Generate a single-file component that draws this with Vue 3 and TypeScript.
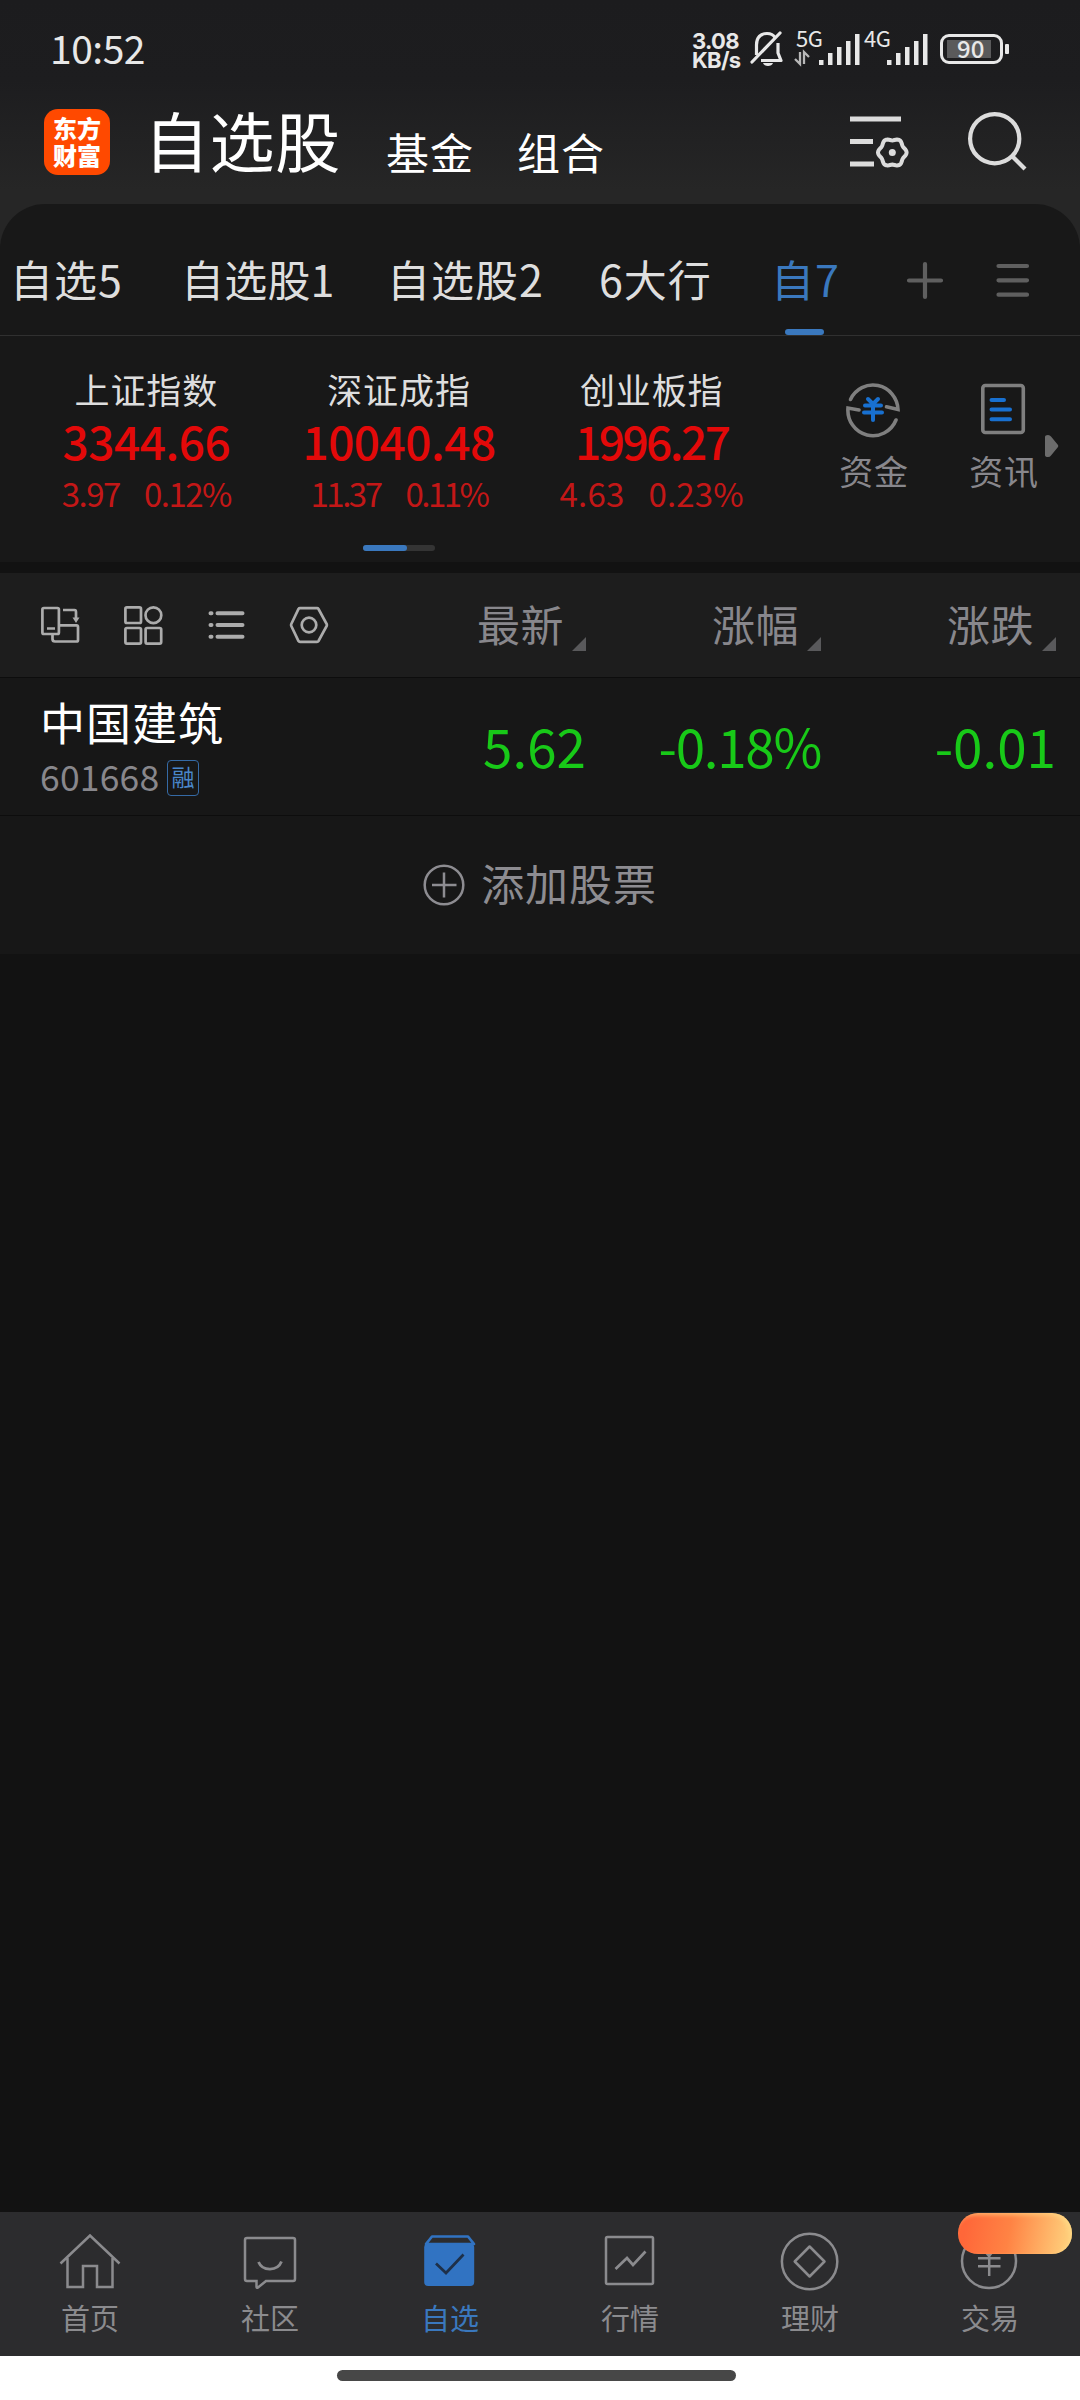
<script setup lang="ts">
interface IndexQuote { name: string; value: string; change: string; percent: string; key: string }
interface Column { label: string; value: string; key: string }

const groups: string[] = ['自选5', '自选股1', '自选股2', '6大行', '自7']
const activeGroup = 4

const indices: IndexQuote[] = [
  { name: '上证指数', value: '3344.66', change: '3.97', percent: '0.12%', key: 'sh' },
  { name: '深证成指', value: '10040.48', change: '11.37', percent: '0.11%', key: 'sz' },
  { name: '创业板指', value: '1996.27', change: '4.63', percent: '0.23%', key: 'cy' },
]

const columns: Column[] = [
  { label: '最新', value: '5.62', key: 'last' },
  { label: '涨幅', value: '-0.18%', key: 'pct' },
  { label: '涨跌', value: '-0.01', key: 'diff' },
]

const nav: string[] = ['首页', '社区', '自选', '行情', '理财', '交易']
const activeNav = 2

// Six-lobed outline of the settings gear
const gear: string = Array.from({ length: 72 }, (_, i) => {
  const a = (i * Math.PI) / 36
  const r = 13.2 + 1.1 * Math.cos(6 * a)
  return `${(46.3 + r * Math.cos(a)).toFixed(2)},${(42.5 + r * Math.sin(a)).toFixed(2)}`
}).join(' ')

const bars = [
  { x: 0, h: 5 }, { x: 9, h: 12 }, { x: 18, h: 18 }, { x: 27, h: 24 }, { x: 36, h: 31 },
]
</script>

<template>
  <div class="screen">
    <header class="top">
      <div class="status">
        <span class="time">10:52</span>
        <div class="status-right">
          <div class="speed"><span>3.08</span><span>KB/s</span></div>
          <svg class="bell" width="34" height="38" viewBox="0 0 34 38" fill="none" stroke="#e8e8e8" stroke-width="3.200">
            <path d="M6.500 25V15C6.500 7 11 3.500 17 3.500C21 3.500 23.500 5 25 7.500M28 13V23L31 30.500H11" stroke-linejoin="round" />
            <path d="M2 32L30 3" stroke-linecap="round" />
            <path d="M13 33H23C22 37 14 37 13 33Z" fill="#e8e8e8" stroke="none" />
          </svg>
          <svg class="signals" width="136" height="38" viewBox="0 0 136 38" fill="#e8e8e8">
            <text x="1" y="17" class="net" textLength="27">5G</text>
            <path d="M5 22V34L0 29M9 34V22L14 27" fill="none" stroke="#b8b8b8" stroke-width="2.300" />
            <rect v-for="b in bars" :key="b.x" :x="24 + b.x" :y="35 - b.h" width="4.500" :height="b.h" />
            <text x="69" y="17" class="net" textLength="27">4G</text>
            <rect v-for="b in bars" :key="'s' + b.x" :x="92 + b.x" :y="35 - b.h" width="4.500" :height="b.h" />
          </svg>
          <div class="battery"><span class="charge"></span><b>90</b></div>
          <span class="nub"></span>
        </div>
      </div>
      <div class="title-row">
        <div class="logo"><span>东方</span><span>财富</span></div>
        <h1>自选股</h1>
        <span class="sub fund">基金</span>
        <span class="sub combo">组合</span>
        <svg class="filter" width="64" height="64" viewBox="0 0 64 64" fill="none" stroke="#dcdcdc">
          <path d="M4 9H55M4 31.500H27M4 54H28" stroke-width="5" />
          <polygon :points="gear" stroke-width="4" stroke-linejoin="round" />
          <circle cx="46.300" cy="42.500" r="3.500" fill="#dcdcdc" stroke="none" />
        </svg>
        <svg class="search" width="64" height="64" viewBox="0 0 64 64" fill="none" stroke="#dcdcdc" stroke-width="4.200">
          <circle cx="28.700" cy="28.700" r="24.600" /><path d="M46.500 46.500L59 59" />
        </svg>
      </div>
    </header>

    <main>
      <section class="panel">
        <nav class="tabs">
          <span v-for="(g, i) in groups" :key="g" class="tab" :class="['t' + i, { on: i === activeGroup }]">{{ g }}</span>
          <svg class="tab-icons" width="130" height="40" viewBox="0 0 130 40" stroke="#5f5f5f" stroke-width="4.200" stroke-linecap="round">
            <path d="M6 20.500H38M22 4V37M95.500 6H124M95.500 20.300H124M95.500 34.700H124" />
          </svg>
        </nav>
        <div class="indices">
          <div v-for="q in indices" :key="q.key" class="index" :class="q.key">
            <span class="name">{{ q.name }}</span>
            <span class="value">{{ q.value }}</span>
            <span class="delta"><i>{{ q.change }}</i><i>{{ q.percent }}</i></span>
          </div>
          <div class="tool money">
            <svg width="60" height="60" viewBox="0 0 60 60" fill="none" stroke="#7f7f7f" stroke-width="3.600">
              <path d="M7.500 20.500A25 25.500 0 0 1 55 30.500L43.500 27.800" stroke-linecap="round" />
              <path d="M53 41A25 25.500 0 0 1 5 29L16 31" stroke-linecap="round" />
              <path d="M25 20L30 25L35 20M22 26.500H38M21 33.500H39M30 26V41" stroke="#1870d0" stroke-width="4" stroke-linecap="round" />
            </svg>
            <span>资金</span>
          </div>
          <div class="tool news">
            <svg width="60" height="60" viewBox="0 0 60 60" fill="none" stroke="#7f7f7f" stroke-width="3.600">
              <rect x="9.800" y="6.500" width="40.500" height="47" rx="2.500" />
              <path d="M18.500 21H31M18.500 30.600H37M18.500 40.300H37" stroke="#1870d0" stroke-width="4" stroke-linecap="round" />
            </svg>
            <span>资讯</span>
          </div>
          <svg class="more" width="14" height="22" viewBox="0 0 14 22" fill="#6c6c6c"><path d="M0 2Q0 0 3 0Q5 0 6 1.500L13 10Q13.500 11 13 12L6 20.500Q5 22 3 22Q0 22 0 20Z" /></svg>
        </div>
        <div class="pager"><span></span></div>
      </section>

      <section class="toolbar">
        <svg class="tools" width="300" height="44" viewBox="0 0 300 44" fill="none" stroke="#acacac" stroke-width="2.700">
          <g transform="translate(0 1)">
            <rect x="7.400" y="4" width="16.500" height="26" rx="1.500" />
            <path d="M12 24.500H20M17.500 30.500V35Q17.500 37.500 20 37.500H41.500Q43 37.500 43 36V23Q43 21.300 41.500 21.300H24M28 6H39.500Q41 6 41 8V15" />
            <path d="M37.500 13.500H44.500L41 19Z" fill="#acacac" stroke="none" />
          </g>
          <g>
            <rect x="90.400" y="4.400" width="15.600" height="15.600" rx="1.500" />
            <circle cx="118.400" cy="12.200" r="7.900" />
            <rect x="90.400" y="25" width="15.600" height="15.600" rx="1.500" />
            <rect x="110.600" y="25" width="15.600" height="15.600" rx="1.500" />
          </g>
          <path d="M182.500 10.300H207.500M182.500 22H207.500M182.500 33.700H207.500M175.500 10.300H176.500M175.500 22H176.500M175.500 33.700H176.500" stroke-width="4" stroke-linecap="round" />
          <path d="M265 5.200H282Q283 5.200 283.500 6L291.700 21Q292.100 22 291.700 23L283.500 38Q283 38.800 282 38.800H265Q264 38.800 263.500 38L256.300 23Q255.800 22 256.300 21L263.500 6Q264 5.200 265 5.200Z" />
          <circle cx="274" cy="22" r="7.300" />
        </svg>
        <span v-for="c in columns" :key="c.key" class="col">{{ c.label }}<em></em></span>
      </section>

      <section class="stock">
        <div class="identity">
          <strong>中国建筑</strong>
          <div class="code"><span>601668</span><em>融</em></div>
        </div>
        <span v-for="c in columns" :key="c.key" class="price" :class="c.key">{{ c.value }}</span>
      </section>

      <section class="add">
        <svg width="42" height="42" viewBox="0 0 42 42" fill="none" stroke="#8d8c91" stroke-width="2.500">
          <circle cx="21" cy="21" r="19.300" /><path d="M9 21H33.500M21 8.500V33.500" />
        </svg>
        <span>添加股票</span>
      </section>
    </main>

    <footer>
      <div v-for="(n, i) in nav" :key="n" class="nav-item" :class="{ on: i === activeNav }">
        <svg width="64" height="64" viewBox="0 0 64 64" fill="none" stroke="#8b8b8e" stroke-width="2.500">
          <template v-if="i === 0">
            <path d="M2.500 33.500L32 5.500L61.500 33.500M9.500 28V57H25V36H39V57H54.500V28" />
          </template>
          <template v-else-if="i === 1">
            <path d="M9 8H55Q57 8 57 10V49Q57 51 55 51H28L20 57.500Q18.500 58.500 18.500 56.500V51H9Q7 51 7 49V10Q7 8 9 8Z" />
            <path d="M20.500 32C24.500 41.500 39.500 41.500 43.500 31.500" stroke-width="2.800" />
          </template>
          <template v-else-if="i === 2">
            <path d="M14 6.500H50L56 14H8Z" stroke="#3173c2" stroke-width="2.700" stroke-linejoin="round" />
            <rect x="6.200" y="13.500" width="50" height="42.500" rx="4" fill="#3173c2" stroke="none" />
            <path d="M18 33.500L28 43L45.500 24.500" stroke="#1e3049" stroke-width="2.700" />
          </template>
          <template v-else-if="i === 3">
            <rect x="8" y="7" width="47" height="47" rx="1.500" />
            <path d="M17.500 39L29 28L35 35L47.500 21.500" stroke-width="2.700" />
          </template>
          <template v-else-if="i === 4">
            <circle cx="31.600" cy="31.500" r="27.700" />
            <path d="M31.600 16.500L46.500 31.500L31.600 46.500L16.700 31.500Z" stroke-linejoin="round" />
          </template>
          <template v-else>
            <circle cx="31" cy="31" r="27" />
            <path d="M23.500 17L31 26L38.500 17M20 28.200H42.500M20 36.300H42.500M31.200 25V46" />
          </template>
        </svg>
        <span>{{ n }}</span>
        <i v-if="i === 5" class="promo"></i>
      </div>
    </footer>
    <div class="home"><span></span></div>
  </div>
</template>

<style>
body { margin: 0; background: #121212; }
</style>

<style scoped>
.screen { width: 1080px; height: 2400px; display: flex; flex-direction: column; overflow: hidden; background: #121212; color: #dedede; font-family: "Noto Sans CJK SC", "Noto Sans", sans-serif; line-height: 1; }
.screen * { box-sizing: border-box; }
span, strong, h1 { white-space: nowrap; }
i, em { font-style: normal; }
main { flex: 1; }
.top { height: 249px; margin-bottom: -45px; flex: none; background: linear-gradient(#1c1c1e 0, #1d1d1f 80px, #262626 190px); }
.status { height: 98px; display: flex; justify-content: space-between; padding: 0 71px 0 50px; }
.time { font-size: 39px; margin-top: 28px; height: 39px; color: #e8e8e8; letter-spacing: -.5px; font-weight: 400; }
.status-right { display: flex; padding-top: 30px; }
.speed { width: 58px; display: flex; flex-direction: column; font-family: Inter, sans-serif; font-size: 22px; line-height: 18.500px; font-weight: 700; color: #e8e8e8; letter-spacing: -.7px; padding-top: 2px; }
.bell { margin-right: 11px; }
.signals { margin-right: 9px; overflow: visible; }
.net { font-size: 22px; }
.battery { position: relative; width: 63px; height: 30px; margin-top: 4px; border: 3.500px solid #e8e8e8; border-radius: 9px; padding: 3px 4px; color: #e8e8e8; }
.charge { display: block; width: 44px; height: 18px; background: #5a5a5b; }
.battery b { position: absolute; left: 14px; top: -1px; font-weight: 500; font-size: 24px; line-height: 24px; }
.nub { width: 4px; height: 10px; margin: 14px 0 0 2px; background: #e8e8e8; border-radius: 1px; }
.title-row { display: flex; padding-left: 44px; height: 88px; }
.logo { width: 66px; height: 66px; margin-top: 11px; border-radius: 14px; background: #ff4900; color: #fff; font: 900 24px/27px "Noto Sans CJK SC", sans-serif; display: flex; flex-direction: column; align-items: center; padding-top: 5px; }
h1 { margin: 9px 0 0 34px; width: 242px; font-size: 65px; line-height: 65px; font-weight: 400; color: #fff; letter-spacing: .6px; }
.sub { width: 131px; margin-top: 32px; font-size: 43px; line-height: 43px; color: #fff; letter-spacing: .9px; }
.combo { width: 329px; }
.filter { margin-top: 12px; }
.search { margin: 12px 0 0 56px; }
.panel { height: 358px; background: #181818; border-radius: 45px 45px 0 0; }
.tabs { display: grid; grid-template-columns: 171px 206px 212px 172px 132px 130px; height: 132px; padding-left: 10px; border-bottom: 1px solid #303030; }
.tab { position: relative; padding-top: 53px; font-size: 43px; line-height: 43px; letter-spacing: 1px; }
.tab.t1 { letter-spacing: .2px; }
.tab.on { color: #3a78be; }
.tab.on::after { content: ""; position: absolute; left: 14px; bottom: 0; width: 39px; height: 6px; border-radius: 3px; background: #3a78be; }
.tab-icons { margin-top: 56px; }
.indices { height: 209px; display: flex; padding-left: 20px; }
.index { width: 252.700px; display: flex; flex-direction: column; align-items: center; padding-top: 35px; }
.name { font-size: 35px; line-height: 35px; letter-spacing: .9px; }
.value { margin-top: 11px; font-size: 46px; line-height: 46px; font-weight: 500; color: #e30909; letter-spacing: -.5px; }
.cy .value { letter-spacing: -2.500px; }
.delta { display: flex; gap: 24px; margin-top: 14px; font-size: 33px; line-height: 33px; color: #c31717; letter-spacing: -1.500px; }
.sz .delta { letter-spacing: -2.500px; gap: 25px; }
.cy .delta { letter-spacing: .2px; }
.tool { width: 130px; display: flex; flex-direction: column; align-items: center; padding-top: 43px; font-size: 34px; line-height: 34px; color: #88878c; letter-spacing: .8px; }
.tool span { margin: 15px 0 0 2px; }
.money { margin-left: 30px; }
.more { margin: 99px 0 0 -23px; }
.pager { width: 72px; height: 6px; margin-left: 363px; border-radius: 3px; background: #343434; }
.pager span { display: block; width: 44px; height: 6px; border-radius: 3px; background: #3a78be; }
.toolbar { margin-top: 11px; height: 105px; background: #1d1d1d; border-bottom: 1px solid #0d0d0d; display: flex; padding-left: 35px; }
.tools { margin: 30px 16px 0 0; }
.col { width: 235px; display: flex; justify-content: flex-end; padding-top: 29px; font-size: 43px; line-height: 43px; color: #88878c; letter-spacing: .5px; }
.col em { width: 14px; height: 14px; margin: 35px 0 0 8px; background: #59595b; clip-path: polygon(100% 0, 100% 100%, 0 100%); }
.stock { height: 138px; background: #171717; border-bottom: 1px solid #0d0d0d; display: flex; padding-left: 40px; }
.identity { width: 311px; padding-top: 21px; }
.identity strong { display: block; font-size: 45px; line-height: 45px; font-weight: 400; color: #fff; letter-spacing: 1px; }
.code { display: flex; color: #88878c; font-size: 35.500px; line-height: 36px; padding-top: 14px; }
.code span { width: 127px; letter-spacing: .2px; }
.code em { width: 32px; height: 36px; border: 1.500px solid #356aa5; border-radius: 4px; margin-top: 2px; font-size: 23px; line-height: 31px; text-align: center; color: #4a87cb; }
.price { width: 235px; text-align: right; padding-top: 41px; font-size: 53px; line-height: 53px; color: #18c918; letter-spacing: 0; }
.price.pct { letter-spacing: -1.300px; }
.add { height: 138px; background: #171717; display: flex; justify-content: center; align-items: center; color: #8d8c91; font-size: 43px; letter-spacing: .9px; gap: 16px; }
.add span { margin-top: -6px; }
footer { height: 144px; flex: none; background: #2c2c2e; display: flex; }
.nav-item { position: relative; width: 180px; display: flex; flex-direction: column; align-items: center; padding-top: 18px; font-size: 29px; line-height: 29px; color: #8b8b8e; }
.nav-item span { margin-top: 9px; }
.nav-item.on { color: #3a78be; }
.promo { position: absolute; left: 58px; top: 1px; width: 114px; height: 41px; border-radius: 20px; background: linear-gradient(100deg, #ff6739 8%, #ff8344 45%, #ffca78 92%); box-shadow: inset -3px 2px 4px #ffe08a99; }
.home { height: 44px; flex: none; background: #fff; display: flex; justify-content: center; padding: 14px 7px 0 0; }
.home span { width: 399px; height: 11px; border-radius: 6px; background: #474747; }
</style>
